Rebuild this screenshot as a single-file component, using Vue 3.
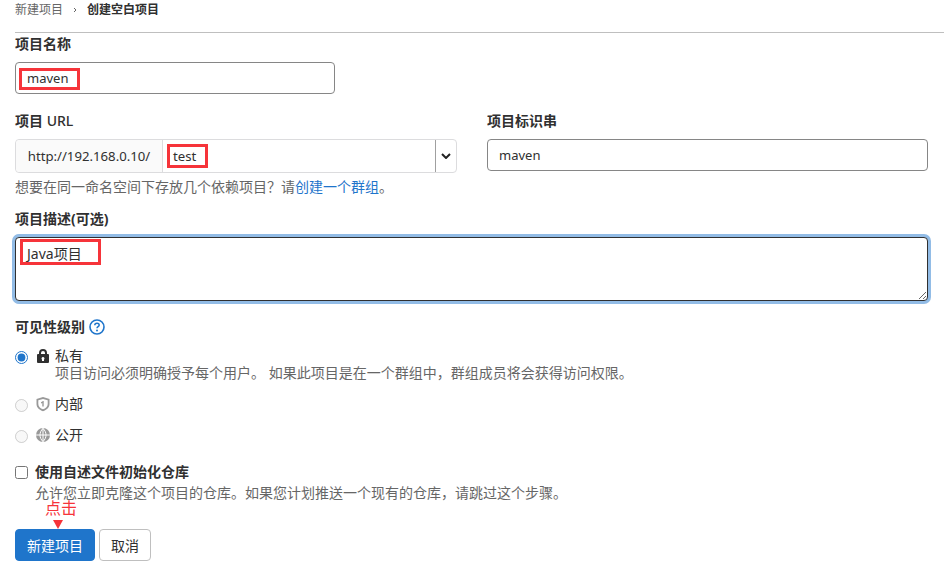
<script setup>
const url = 'http://192.168.0.10/'
</script>

<template>
  <div class="page">
    <nav class="crumbs">
      <span class="crumb">新建项目</span>
      <svg class="sep" viewBox="0 0 8 8" width="8" height="8"><path d="M3 2l2 2-2 2" fill="none" stroke="#666" stroke-width="1"/></svg>
      <strong>创建空白项目</strong>
    </nav>

    <label class="lbl first">项目名称</label>
    <div class="name-wrap">
      <input class="inp" value="maven" readonly />
      <span class="mark mark-name"></span>
    </div>

    <div class="url-row">
      <div class="col-url">
        <label class="lbl">项目 <span class="latin">URL</span></label>
        <div class="group">
          <span class="prefix">{{ url }}</span>
          <span class="ns">test</span>
          <span class="caret">
            <svg viewBox="0 0 10 6" width="10" height="6"><path d="M1 1l4 4 4-4" fill="none" stroke="#222" stroke-width="2"/></svg>
          </span>
          <span class="mark mark-ns"></span>
        </div>
      </div>
      <div class="col-slug">
        <label class="lbl">项目标识串</label>
        <input class="inp slug" value="maven" readonly />
      </div>
    </div>

    <p class="help hint">想要在同一命名空间下存放几个依赖项目&#xFF1F;请<a>创建一个群组</a>。</p>

    <label class="lbl desc-lbl">项目描述(可选)</label>
    <div class="desc-wrap">
      <textarea class="area" readonly>Java项目</textarea>
      <span class="mark mark-desc"></span>
    </div>

    <div class="vis-head">
      <span class="lbl">可见性级别</span>
      <svg class="qmark" viewBox="0 0 16 16" width="16" height="16">
        <circle cx="8" cy="8" r="7" fill="none" stroke="#1f75cb" stroke-width="1.6"/>
        <path d="M5.8 6.2c0-1.3 1-2 2.2-2s2.2.8 2.2 1.9c0 1.6-2.2 1.6-2.2 3.2" fill="none" stroke="#1f75cb" stroke-width="1.5"/>
        <circle cx="8" cy="11.6" r="1" fill="#1f75cb"/>
      </svg>
    </div>

    <div class="opt opt-private">
      <input type="radio" name="v" checked />
      <div>
        <div class="opt-title">
          <svg class="ic" viewBox="0 0 16 16" width="16" height="16">
            <path fill-rule="evenodd" fill="#303030" d="M4 6V5a4 4 0 0 1 8 0v1h1a1 1 0 0 1 1 1v7a1 1 0 0 1-1 1H3a1 1 0 0 1-1-1V7a1 1 0 0 1 1-1h1zm2 0h4V5a2 2 0 0 0-4 0v1zm2 3a1.5 1.5 0 0 0-1 2.6V13h2v-1.4A1.5 1.5 0 0 0 8 9z"/>
          </svg>
          <span>私有</span>
        </div>
        <div class="help">项目访问必须明确授予每个用户。 如果此项目是在一个群组中&#xFF0C;群组成员将会获得访问权限。</div>
      </div>
    </div>

    <div class="opt opt-internal">
      <input type="radio" name="v" disabled />
      <div class="opt-title">
        <svg class="ic" viewBox="0 0 16 16" width="16" height="16">
          <path fill-rule="evenodd" fill="#999" d="M8 1l6.500 2v5c0 3.500-2.800 6-6.500 7.200C4.300 14 1.500 11.500 1.500 8V3L8 1zm0 2L3.300 4.300V8c0 2.500 2 4.300 4.700 5.300 2.700-1 4.700-2.800 4.700-5.300V4.300L8 3z"/>
          <path fill="#999" d="M8.700 5v5.500H7.300V7L6 7.600V6.200L8 5z"/>
        </svg>
        <span>内部</span>
      </div>
    </div>

    <div class="opt opt-public">
      <input type="radio" name="v" disabled />
      <div class="opt-title">
        <svg class="ic" viewBox="0 0 16 16" width="16" height="16">
          <circle cx="8" cy="8" r="7" fill="#999"/>
          <path d="M1 8h14M8 1v14M8 1.500c-4 3.600-4 9.400 0 13M8 1.500c4 3.600 4 9.400 0 13" fill="none" stroke="#fff" stroke-width="1"/>
        </svg>
        <span>公开</span>
      </div>
    </div>

    <div class="readme">
      <input type="checkbox" />
      <div>
        <div class="lbl readme-title">使用自述文件初始化仓库</div>
        <div class="help readme-help">允许您立即克隆这个项目的仓库。如果您计划推送一个现有的仓库&#xFF0C;请跳过这个步骤。</div>
      </div>
    </div>

    <div class="actions">
      <button class="btn primary" type="button">新建项目</button>
      <button class="btn" type="button">取消</button>
      <span class="click-note">点击</span>
      <span class="click-arrow"></span>
    </div>
  </div>
</template>

<style>
html, body { margin: 0; background: #fff; }
</style>

<style scoped>
.page {
  width: 944px;
  height: 576px;
  box-sizing: border-box;
  padding: 0 0 0 15px;
  overflow: hidden;
  font-family: "Noto Sans", "Noto Sans CJK SC", sans-serif;
  font-size: 14px;
  color: #303030;
}
.crumbs {
  height: 30px;
  border-bottom: 1px solid #bfbfbf;
  display: flex;
  align-items: flex-start;
  padding-top: 2px;
  font-size: 12px;
  line-height: 16px;
}
.crumb { color: #666; }
.sep { margin: 4px 8px 0 8px; }
.crumbs strong { color: #303030; font-weight: 700; }
.lbl {
  display: block;
  font-size: 14px;
  font-weight: 700;
  line-height: 20px;
  color: #303030;
}
.latin { font-weight: 500; }
.first { margin-top: 1px; }
.name-wrap { position: relative; width: 320px; margin-top: 8px; }
.inp {
  display: block;
  width: 100%;
  height: 32px;
  box-sizing: border-box;
  border: 1px solid #868686;
  border-radius: 4px;
  padding: 0 11px;
  font: inherit;
  font-size: 13px;
  color: #303030;
  background: #fff;
  outline: none;
}
.mark {
  position: absolute;
  box-sizing: border-box;
  border: 3px solid #f6343a;
  pointer-events: none;
}
.mark-name { left: 4px; top: 6px; width: 61px; height: 22px; }
.url-row { display: flex; gap: 30px; margin-top: 17px; }
.col-url { width: 442px; }
.col-slug { width: 441px; }
.group {
  position: relative;
  display: flex;
  height: 34px;
  margin-top: 8px;
  box-sizing: border-box;
  border: 1px solid #dcdcde;
  border-radius: 4px;
  align-items: stretch;
  font-size: 13.200px;
  line-height: 32px;
}
.prefix {
  width: 147px;
  box-sizing: border-box;
  background: #fafafa;
  border-right: 1px solid #dcdcde;
  border-radius: 4px 0 0 4px;
  text-align: center;
  color: #303030;
}
.ns { flex: 1; padding-left: 10px; }
.caret {
  width: 20px;
  border-left: 1px solid #a0a0a0;
  display: flex;
  align-items: center;
  justify-content: center;
}
.mark-ns { left: 151px; top: 4px; width: 41px; height: 24px; }
.slug { margin-top: 8px; }
.help { font-size: 14px; line-height: 16px; color: #666; }
.hint { margin: 6px 0 0; }
.hint a { color: #1f75cb; }
.desc-lbl { margin-top: 14px; }
.desc-wrap { position: relative; width: 913px; margin-top: 8px; height: 64px; }
.area {
  display: block;
  width: 100%;
  height: 64px;
  box-sizing: border-box;
  border: 1px solid #303030;
  border-radius: 4px;
  box-shadow: 0 0 0 3px #92bce6;
  padding: 5px 11px;
  font: inherit;
  color: #303030;
  outline: none;
  resize: vertical;
}
.mark-desc { left: 5px; top: 2px; width: 81px; height: 26px; }
.vis-head { display: flex; align-items: center; gap: 4px; margin-top: 16px; height: 20px; }
.qmark { display: block; }
.opt { display: flex; align-items: flex-start; }
.opt input {
  width: 13px;
  height: 13px;
  margin: 3px 9px 0 0;
  accent-color: #1f75cb;
}
.opt-private { margin-top: 11px; }
.opt-title { display: flex; align-items: center; height: 16px; line-height: 16px; color: #303030; }
.ic { margin: 0 4px 0 -2px; display: block; }
.opt-private .help { margin-left: 18px; margin-top: 1px; }
.opt-private > div { width: 800px; }
.opt-internal { margin-top: 15px; }
.opt-public { margin-top: 15px; }
.readme { display: flex; margin-top: 20px; align-items: flex-start; }
.readme input { width: 13px; height: 13px; margin: 3px 7px 0 0; }
.readme-title { line-height: 18px; }
.readme-help { margin-top: 4px; }
.actions { position: relative; display: flex; gap: 4px; margin-top: 28px; }
.btn {
  height: 32px;
  width: 52px;
  box-sizing: border-box;
  border: 1px solid #bfbfbf;
  border-radius: 4px;
  background: #fff;
  font: inherit;
  color: #303030;
  padding: 0;
}
.btn.primary { width: 80px; background: #1f75cb; border-color: #1f75cb; color: #fff; }
.click-note {
  position: absolute;
  left: 30px;
  top: -31px;
  font-size: 16px;
  line-height: 20px;
  color: #f6343a;
}
.click-arrow {
  position: absolute;
  left: 38px;
  top: -9px;
  width: 0;
  height: 0;
  border-left: 5.500px solid transparent;
  border-right: 5.500px solid transparent;
  border-top: 9px solid #f6343a;
}
</style>
